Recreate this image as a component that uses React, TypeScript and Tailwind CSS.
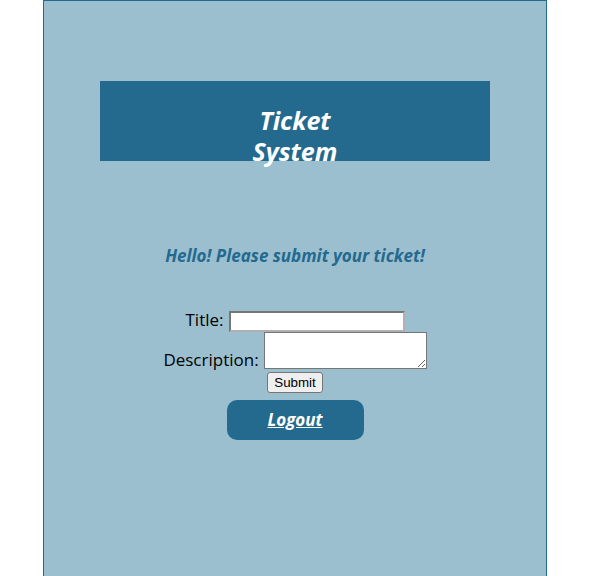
export default function App() {
    const font = { fontFamily: '"Open Sans", "Noto Sans", sans-serif' };

    return (
        <div className="h-[576px] w-[616px] overflow-hidden bg-white">
            <div className="ml-[43px] flex h-[620px] w-[504px] flex-col items-center border border-[#236a8e] bg-[#9bbfcf] pt-[80px] font-['Open_Sans',sans-serif]">
                <div className="h-[80px] w-[390px] bg-[#236a8e] pt-[24px]">
                    <h1 className="text-center text-[25px] leading-[31px] font-bold italic text-white">
                        Ticket<br />System
                    </h1>
                </div>

                <h2 className="mt-[82px] text-[17px] leading-[25px] font-bold italic text-[#236a8e]">
                    Hello! Please submit your ticket!
                </h2>

                <form className="mt-[41px] flex flex-col items-center" onSubmit={(e) => e.preventDefault()}>
                    <div className="flex items-baseline">
                        <label htmlFor="title" className="mr-[5px] text-[17px] leading-[21px] text-black">Title:</label>
                        <input id="title" type="text" className="h-[21px] w-[176px] border-2 border-t-[#767676] border-l-[#767676] border-r-[#b0b0b0] border-b-[#b0b0b0] bg-white px-[2px] text-[13.33px]" />
                    </div>
                    <div className="flex items-end">
                        <label htmlFor="description" className="mr-[5px] text-[17px] leading-[24px] text-black">Description:</label>
                        <textarea id="description" className="mb-[3px] h-[37px] w-[163px] border border-[#767676] bg-white" />
                    </div>
                    <button type="submit" className="h-[21px] rounded-[3px] border border-[#767676] bg-[#efefef] px-[6px] font-['Liberation_Sans',sans-serif] text-[13.33px] leading-[15px] text-black">
                        Submit
                    </button>
                </form>

                <button className="mt-[7px] h-[40px] w-[137px] rounded-[10px] bg-[#236a8e] text-[17px] font-bold italic text-white underline" style={font}>
                    Logout
                </button>
            </div>
        </div>
    );
}
